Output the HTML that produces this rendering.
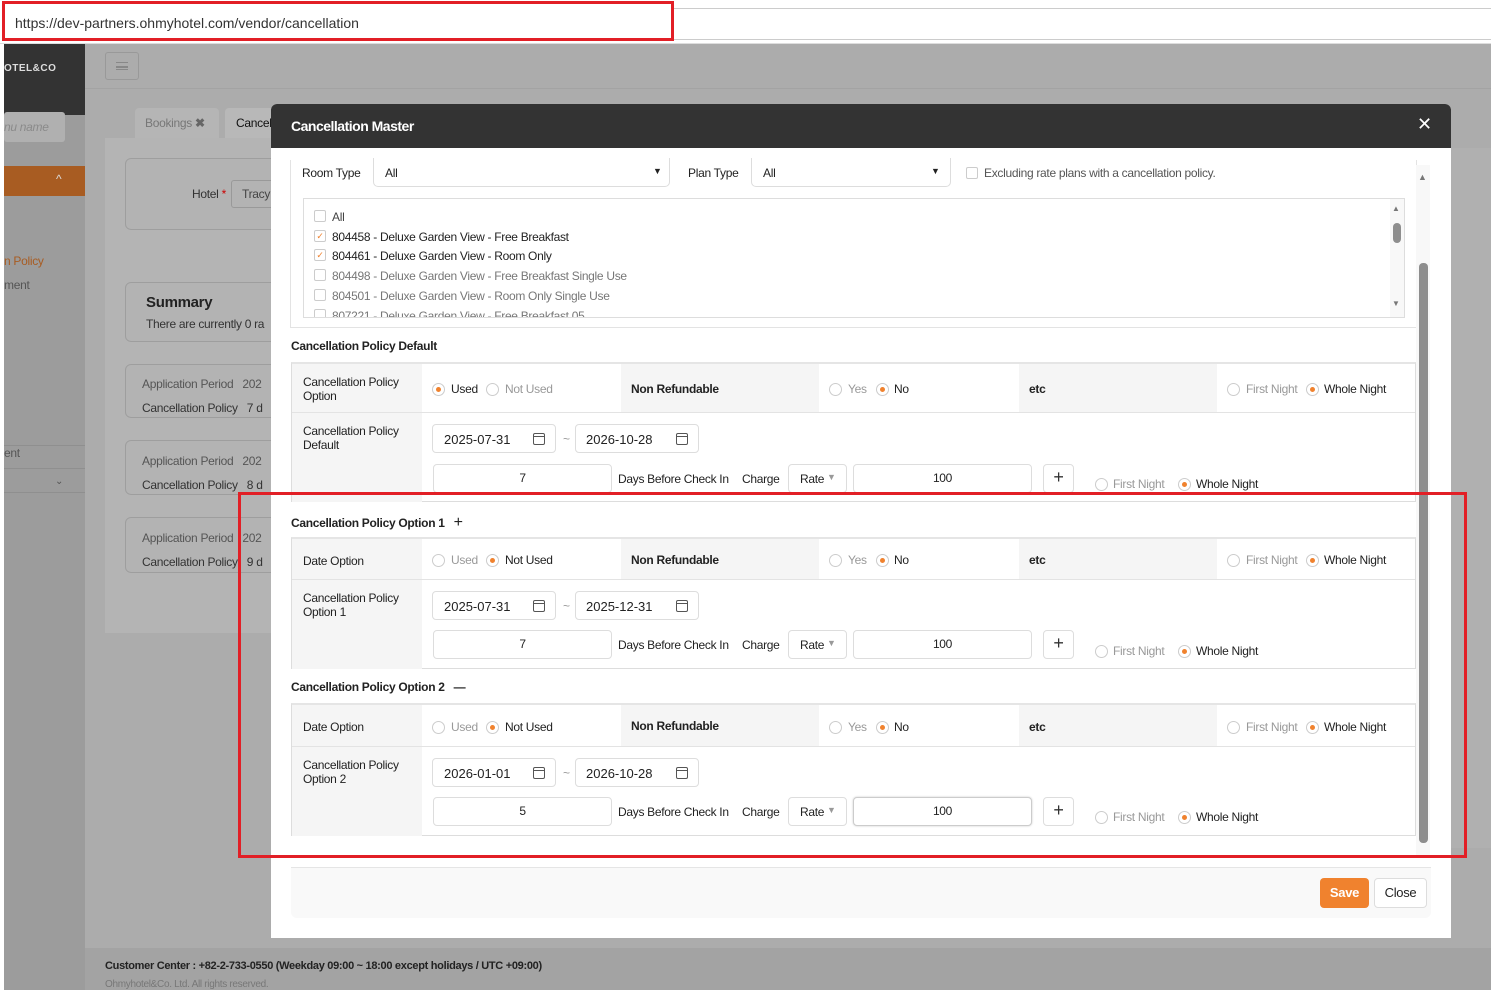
<!DOCTYPE html>
<html><head><meta charset="utf-8"><style>
*{box-sizing:border-box;margin:0;padding:0}
body{width:1491px;height:990px;position:relative;overflow:hidden;background:#acacac;font-family:"Liberation Sans",sans-serif;font-size:12px;color:#222;letter-spacing:-0.3px}
.a{position:absolute}
.box{position:absolute;border:1px solid #ddd;border-radius:4px;background:#fff}
.r{position:absolute;width:13px;height:13px;border:1px solid #ccc;border-radius:50%;background:#fff}
.r.on::after{content:"";position:absolute;left:3px;top:3px;width:5px;height:5px;border-radius:50%;background:#f0822e}
.t{position:absolute;white-space:nowrap}
.g{color:#999}
.sec{position:absolute;left:291px;width:1125px;border:1px solid #ddd;border-top:2px solid #e5e5e5;background:#fff}
.lab{position:absolute;left:0;top:0;width:130px;background:#f5f5f5}
.cell{position:absolute;background:#f5f5f5}
.cal{position:absolute;right:10px;top:8px;width:12px;height:12px;border:1.2px solid #555;border-radius:2px}
.cal::before{content:"";position:absolute;left:-1px;right:-1px;top:2px;border-top:1.2px solid #555}
.bd{font-weight:bold;color:#222}
.bgp{position:absolute;background:#b3b3b3;border:1px solid #9e9e9e;border-radius:6px}
</style></head><body>
<!-- browser bar -->
<div class="a" style="left:0;top:0;width:1491px;height:44px;background:#fff;border-bottom:1px solid #ddd"></div>
<div class="a" style="left:672px;top:8px;width:819px;height:32px;border-top:1px solid #ccc;border-bottom:1px solid #ccc"></div>
<div class="t" style="left:15px;top:15px;font-size:14px;color:#333;letter-spacing:0">https://dev-partners.ohmyhotel.com/vendor/cancellation</div>
<div class="a" style="left:2px;top:1px;width:672px;height:40px;border:3px solid #e21f26"></div>
<div class="a" style="left:0;top:44px;width:4px;height:946px;background:#fff"></div>
<!-- sidebar -->
<div class="a" style="left:4px;top:44px;width:81px;height:946px;background:#9c9c9c"></div>
<div class="a" style="left:4px;top:44px;width:81px;height:71px;background:#333"></div>
<div class="t" style="left:4px;top:63px;color:#ddd;font-weight:bold;font-size:10px;letter-spacing:0.5px">OTEL&amp;CO</div>
<div class="a" style="left:4px;top:112px;width:61px;height:30px;background:#b0b0b0;border-radius:3px"></div>
<div class="t" style="left:4px;top:120px;color:#8a8a8a;font-style:italic">nu name</div>
<div class="a" style="left:4px;top:166px;width:81px;height:30px;background:#a85c22"></div>
<div class="t" style="left:56px;top:172px;color:#ddd;font-size:12px">&#94;</div>
<div class="t" style="left:4px;top:254px;color:#a85c22">n Policy</div>
<div class="t" style="left:4px;top:278px;color:#555">ment</div>
<div class="t" style="left:4px;top:446px;color:#555">ent</div>
<div class="a" style="left:4px;top:445px;width:81px;height:1px;background:#8f8f8f;top:445px"></div>
<div class="a" style="left:4px;top:468px;width:81px;height:1px;background:#8f8f8f"></div>
<div class="a" style="left:4px;top:492px;width:81px;height:1px;background:#8f8f8f"></div>
<div class="t" style="left:55px;top:476px;color:#555;font-size:10px">&#8964;</div>
<!-- main -->
<div class="a" style="left:105px;top:52px;width:34px;height:28px;border:1px solid #999;border-radius:3px"></div>
<div class="a" style="left:116px;top:62px;width:12px;height:8px;border-top:1.5px solid #888;border-bottom:1.5px solid #888"></div>
<div class="a" style="left:116px;top:66px;width:12px;height:1.5px;background:#888"></div>
<div class="a" style="left:85px;top:88px;width:1406px;height:1px;background:#a3a3a3"></div>
<div class="a" style="left:135px;top:108px;width:84px;height:30px;background:#b5b5b5;border-radius:4px 4px 0 0"></div>
<div class="t" style="left:145px;top:116px;color:#777">Bookings <b style="color:#666">&#10006;</b></div>
<div class="a" style="left:225px;top:108px;width:60px;height:30px;background:#b8b8b8;border-radius:4px 4px 0 0"></div>
<div class="t" style="left:236px;top:116px;color:#111">Cancel</div>
<div class="a" style="left:105px;top:138px;width:200px;height:495px;background:#b4b4b4"></div>
<div class="bgp" style="left:125px;top:158px;width:200px;height:72px"></div>
<div class="t" style="left:192px;top:187px;color:#333">Hotel <span style="color:#c00">*</span></div>
<div class="a" style="left:231px;top:180px;width:60px;height:28px;border:1px solid #999;border-radius:3px"></div>
<div class="t" style="left:242px;top:187px;color:#444">Tracy</div>
<div class="bgp" style="left:125px;top:282px;width:200px;height:60px"></div>
<div class="t" style="left:146px;top:294px;font-size:15px;font-weight:bold;color:#222">Summary</div>
<div class="t" style="left:146px;top:317px;color:#333">There are currently 0 ra</div>
<div class="bgp" style="left:125px;top:364px;width:200px;height:54px"></div>
<div class="t" style="left:142px;top:377px;color:#555">Application Period&nbsp;&nbsp;&nbsp;202</div>
<div class="t" style="left:142px;top:401px;color:#333">Cancellation Policy&nbsp;&nbsp;&nbsp;7 d</div>
<div class="bgp" style="left:125px;top:440px;width:200px;height:55px"></div>
<div class="t" style="left:142px;top:454px;color:#555">Application Period&nbsp;&nbsp;&nbsp;202</div>
<div class="t" style="left:142px;top:478px;color:#333">Cancellation Policy&nbsp;&nbsp;&nbsp;8 d</div>
<div class="bgp" style="left:125px;top:517px;width:200px;height:56px"></div>
<div class="t" style="left:142px;top:531px;color:#555">Application Period&nbsp;&nbsp;&nbsp;202</div>
<div class="t" style="left:142px;top:555px;color:#333">Cancellation Policy&nbsp;&nbsp;&nbsp;9 d</div>
<div class="a" style="left:1451px;top:148px;width:40px;height:700px;background:#b0b0b0"></div>
<div class="a" style="left:85px;top:948px;width:1406px;height:42px;background:#a3a3a3"></div>
<div class="t" style="left:105px;top:960px;font-weight:bold;font-size:11px;color:#222">Customer Center : +82-2-733-0550 (Weekday 09:00 ~ 18:00 except holidays / UTC +09:00)</div>
<div class="t" style="left:105px;top:979px;font-size:10px;color:#777">Ohmyhotel&amp;Co. Ltd. All rights reserved.</div>

<!-- modal -->
<div class="a" style="left:271px;top:104px;width:1180px;height:834px;background:#fff;border-radius:6px 6px 0 0"></div>
<div class="a" style="left:271px;top:104px;width:1180px;height:44px;background:#333;border-radius:6px 6px 0 0"></div>
<div class="t" style="left:291px;top:118px;color:#fff;font-weight:bold;font-size:14px;letter-spacing:-0.5px">Cancellation Master</div>
<div class="t" style="left:1417px;top:114px;color:#fff;font-size:18px">&#10005;</div>
<!-- filter area -->
<div class="a" style="left:290px;top:160px;width:1127px;height:168px;border:1px solid #e3e3e3;border-top:none"></div>
<div class="t" style="left:302px;top:166px">Room Type</div>
<div class="box" style="left:373px;top:158px;width:297px;height:29px;border-top:none;border-radius:0 0 5px 5px"></div>
<div class="t" style="left:385px;top:166px">All</div>
<div class="t" style="left:653px;top:166px;font-size:9px">&#9660;</div>
<div class="t" style="left:688px;top:166px">Plan Type</div>
<div class="box" style="left:751px;top:158px;width:200px;height:29px;border-top:none;border-radius:0 0 5px 5px"></div>
<div class="t" style="left:763px;top:166px">All</div>
<div class="t" style="left:931px;top:166px;font-size:9px">&#9660;</div>
<div class="a" style="left:966px;top:167px;width:12px;height:12px;border:1px solid #ccc;border-radius:2px"></div>
<div class="t" style="left:984px;top:166px;color:#555">Excluding rate plans with a cancellation policy.</div>
<div class="a" style="left:303px;top:198px;width:1102px;height:120px;border:1px solid #ddd;overflow:hidden">
 <div class="a" style="left:10px;top:11px;width:12px;height:12px;border:1px solid #ccc;border-radius:2px"></div><div class="t" style="left:28px;top:11px;color:#444">All</div>
 <div class="a" style="left:10px;top:31px;width:12px;height:12px;border:1px solid #ccc;border-radius:2px;color:#f0822e;font-size:9px;line-height:10px;text-align:center">&#10003;</div><div class="t" style="left:28px;top:31px">804458 - Deluxe Garden View - Free Breakfast</div>
 <div class="a" style="left:10px;top:50px;width:12px;height:12px;border:1px solid #ccc;border-radius:2px;color:#f0822e;font-size:9px;line-height:10px;text-align:center">&#10003;</div><div class="t" style="left:28px;top:50px">804461 - Deluxe Garden View - Room Only</div>
 <div class="a" style="left:10px;top:70px;width:12px;height:12px;border:1px solid #ccc;border-radius:2px"></div><div class="t g" style="left:28px;top:70px;color:#777">804498 - Deluxe Garden View - Free Breakfast Single Use</div>
 <div class="a" style="left:10px;top:90px;width:12px;height:12px;border:1px solid #ccc;border-radius:2px"></div><div class="t" style="left:28px;top:90px;color:#777">804501 - Deluxe Garden View - Room Only Single Use</div>
 <div class="a" style="left:10px;top:110px;width:12px;height:12px;border:1px solid #ccc;border-radius:2px"></div><div class="t" style="left:28px;top:110px;color:#777">807221 - Deluxe Garden View - Free Breakfast 05</div>
 <div class="a" style="left:1086px;top:0;width:14px;height:120px;background:#f8f8f8"></div>
 <div class="t" style="left:1088px;top:5px;font-size:8px;color:#777">&#9650;</div>
 <div class="a" style="left:1089px;top:24px;width:8px;height:20px;background:#8e8e8e;border-radius:4px"></div>
 <div class="t" style="left:1088px;top:100px;font-size:8px;color:#777">&#9660;</div>
</div>
<!-- modal scrollbar -->
<div class="a" style="left:1416px;top:165px;width:14px;height:690px;background:#f8f8f8"></div>
<div class="t" style="left:1418px;top:172px;font-size:9px;color:#777">&#9650;</div>
<div class="a" style="left:1419px;top:263px;width:9px;height:580px;background:#8e8e8e;border-radius:4px"></div>

<!-- Default -->
<div class="t bd" style="left:291px;top:339px">Cancellation Policy Default</div>
<div class="sec" style="top:362px;height:140px">
 <div class="lab" style="height:138px"></div>
 <div class="a" style="left:0;top:48px;width:1123px;height:1px;background:#e3e3e3"></div>
 <div class="t" style="left:11px;top:11px;line-height:14px">Cancellation Policy<br>Option</div>
 <div class="r on" style="left:140px;top:19px"></div><div class="t" style="left:159px;top:18px">Used</div>
 <div class="r" style="left:194px;top:19px"></div><div class="t g" style="left:213px;top:18px">Not Used</div>
 <div class="cell" style="left:329px;top:0;width:198px;height:48px"></div><div class="t bd" style="left:339px;top:18px">Non Refundable</div>
 <div class="r" style="left:537px;top:19px"></div><div class="t g" style="left:556px;top:18px">Yes</div>
 <div class="r on" style="left:584px;top:19px"></div><div class="t" style="left:602px;top:18px">No</div>
 <div class="cell" style="left:727px;top:0;width:198px;height:48px"></div><div class="t bd" style="left:737px;top:18px">etc</div>
 <div class="r" style="left:935px;top:19px"></div><div class="t g" style="left:954px;top:18px">First Night</div>
 <div class="r on" style="left:1014px;top:19px"></div><div class="t" style="left:1032px;top:18px">Whole Night</div>
 <div class="t" style="left:11px;top:60px;line-height:14px">Cancellation Policy<br>Default</div>
 <div class="box" style="left:140px;top:60px;width:124px;height:29px"><span class="t" style="left:11px;top:7px;font-size:13px;letter-spacing:0">2025-07-31</span><span class="cal"></span></div>
 <div class="t g" style="left:271px;top:68px">~</div>
 <div class="box" style="left:283px;top:60px;width:124px;height:29px"><span class="t" style="left:10px;top:7px;font-size:13px;letter-spacing:0">2026-10-28</span><span class="cal"></span></div>
 <div class="box" style="left:141px;top:100px;width:179px;height:29px;text-align:center;line-height:27px">7</div>
 <div class="t" style="left:326px;top:108px">Days Before Check In</div>
 <div class="t" style="left:450px;top:108px">Charge</div>
 <div class="box" style="left:496px;top:100px;width:59px;height:29px"><span class="t" style="left:11px;top:7px">Rate</span><span class="t" style="left:38px;top:7px;color:#999;font-size:9px">&#9660;</span></div>
 <div class="box" style="left:561px;top:100px;width:179px;height:29px;text-align:center;line-height:27px">100</div>
 <div class="box" style="left:751px;top:100px;width:31px;height:29px;text-align:center;line-height:25px;font-size:18px;color:#333">+</div>
 <div class="r" style="left:803px;top:114px"></div><div class="t g" style="left:821px;top:113px">First Night</div>
 <div class="r on" style="left:886px;top:114px"></div><div class="t" style="left:904px;top:113px">Whole Night</div>
</div>

<!-- Option 1 -->
<div class="t bd" style="left:291px;top:514px">Cancellation Policy Option 1 <span style="font-weight:normal;font-size:16px;margin-left:6px">+</span></div>
<div class="sec" style="top:537px;height:132px">
 <div class="lab" style="height:130px"></div>
 <div class="a" style="left:0;top:40px;width:1123px;height:1px;background:#e3e3e3"></div>
 <div class="t" style="left:11px;top:15px">Date Option</div>
 <div class="r" style="left:140px;top:15px"></div><div class="t g" style="left:159px;top:14px">Used</div>
 <div class="r on" style="left:194px;top:15px"></div><div class="t" style="left:213px;top:14px">Not Used</div>
 <div class="cell" style="left:329px;top:0;width:198px;height:40px"></div><div class="t bd" style="left:339px;top:14px">Non Refundable</div>
 <div class="r" style="left:537px;top:15px"></div><div class="t g" style="left:556px;top:14px">Yes</div>
 <div class="r on" style="left:584px;top:15px"></div><div class="t" style="left:602px;top:14px">No</div>
 <div class="cell" style="left:727px;top:0;width:198px;height:40px"></div><div class="t bd" style="left:737px;top:14px">etc</div>
 <div class="r" style="left:935px;top:15px"></div><div class="t g" style="left:954px;top:14px">First Night</div>
 <div class="r on" style="left:1014px;top:15px"></div><div class="t" style="left:1032px;top:14px">Whole Night</div>
 <div class="t" style="left:11px;top:52px;line-height:14px">Cancellation Policy<br>Option 1</div>
 <div class="box" style="left:140px;top:52px;width:124px;height:29px"><span class="t" style="left:11px;top:7px;font-size:13px;letter-spacing:0">2025-07-31</span><span class="cal"></span></div>
 <div class="t g" style="left:271px;top:60px">~</div>
 <div class="box" style="left:283px;top:52px;width:124px;height:29px"><span class="t" style="left:10px;top:7px;font-size:13px;letter-spacing:0">2025-12-31</span><span class="cal"></span></div>
 <div class="box" style="left:141px;top:91px;width:179px;height:29px;text-align:center;line-height:27px">7</div>
 <div class="t" style="left:326px;top:99px">Days Before Check In</div>
 <div class="t" style="left:450px;top:99px">Charge</div>
 <div class="box" style="left:496px;top:91px;width:59px;height:29px"><span class="t" style="left:11px;top:7px">Rate</span><span class="t" style="left:38px;top:7px;color:#999;font-size:9px">&#9660;</span></div>
 <div class="box" style="left:561px;top:91px;width:179px;height:29px;text-align:center;line-height:27px">100</div>
 <div class="box" style="left:751px;top:91px;width:31px;height:29px;text-align:center;line-height:25px;font-size:18px;color:#333">+</div>
 <div class="r" style="left:803px;top:106px"></div><div class="t g" style="left:821px;top:105px">First Night</div>
 <div class="r on" style="left:886px;top:106px"></div><div class="t" style="left:904px;top:105px">Whole Night</div>
</div>

<!-- Option 2 -->
<div class="t bd" style="left:291px;top:680px">Cancellation Policy Option 2 <span style="font-weight:bold;margin-left:6px">&#8212;</span></div>
<div class="sec" style="top:703px;height:133px">
 <div class="lab" style="height:131px"></div>
 <div class="a" style="left:0;top:41px;width:1123px;height:1px;background:#e3e3e3"></div>
 <div class="t" style="left:11px;top:15px">Date Option</div>
 <div class="r" style="left:140px;top:16px"></div><div class="t g" style="left:159px;top:15px">Used</div>
 <div class="r on" style="left:194px;top:16px"></div><div class="t" style="left:213px;top:15px">Not Used</div>
 <div class="cell" style="left:329px;top:0;width:198px;height:41px"></div><div class="t bd" style="left:339px;top:14px">Non Refundable</div>
 <div class="r" style="left:537px;top:16px"></div><div class="t g" style="left:556px;top:15px">Yes</div>
 <div class="r on" style="left:584px;top:16px"></div><div class="t" style="left:602px;top:15px">No</div>
 <div class="cell" style="left:727px;top:0;width:198px;height:41px"></div><div class="t bd" style="left:737px;top:15px">etc</div>
 <div class="r" style="left:935px;top:16px"></div><div class="t g" style="left:954px;top:15px">First Night</div>
 <div class="r on" style="left:1014px;top:16px"></div><div class="t" style="left:1032px;top:15px">Whole Night</div>
 <div class="t" style="left:11px;top:53px;line-height:14px">Cancellation Policy<br>Option 2</div>
 <div class="box" style="left:140px;top:53px;width:124px;height:29px"><span class="t" style="left:11px;top:7px;font-size:13px;letter-spacing:0">2026-01-01</span><span class="cal"></span></div>
 <div class="t g" style="left:271px;top:61px">~</div>
 <div class="box" style="left:283px;top:53px;width:124px;height:29px"><span class="t" style="left:10px;top:7px;font-size:13px;letter-spacing:0">2026-10-28</span><span class="cal"></span></div>
 <div class="box" style="left:141px;top:92px;width:179px;height:29px;text-align:center;line-height:27px">5</div>
 <div class="t" style="left:326px;top:100px">Days Before Check In</div>
 <div class="t" style="left:450px;top:100px">Charge</div>
 <div class="box" style="left:496px;top:92px;width:59px;height:29px"><span class="t" style="left:11px;top:7px">Rate</span><span class="t" style="left:38px;top:7px;color:#999;font-size:9px">&#9660;</span></div>
 <div class="box" style="left:561px;top:92px;width:179px;height:29px;text-align:center;line-height:27px;border-color:#ccc;box-shadow:0 0 2px #ccc">100</div>
 <div class="box" style="left:751px;top:92px;width:31px;height:29px;text-align:center;line-height:25px;font-size:18px;color:#333">+</div>
 <div class="r" style="left:803px;top:106px"></div><div class="t g" style="left:821px;top:105px">First Night</div>
 <div class="r on" style="left:886px;top:106px"></div><div class="t" style="left:904px;top:105px">Whole Night</div>
</div>

<!-- footer -->
<div class="a" style="left:291px;top:867px;width:1140px;height:51px;background:#f9f9f9;border-top:1px solid #e5e5e5;border-radius:0 0 6px 6px"></div>
<div class="a" style="left:1320px;top:878px;width:49px;height:30px;background:#f0822e;border-radius:4px;color:#fff;font-weight:bold;text-align:center;line-height:30px;font-size:13px">Save</div>
<div class="a" style="left:1374px;top:878px;width:53px;height:30px;background:#fff;border:1px solid #ddd;border-radius:4px;text-align:center;line-height:28px;font-size:13px">Close</div>

<!-- red box -->
<div class="a" style="left:238px;top:492px;width:1229px;height:366px;border:3px solid #e21f26"></div>
</body></html>
